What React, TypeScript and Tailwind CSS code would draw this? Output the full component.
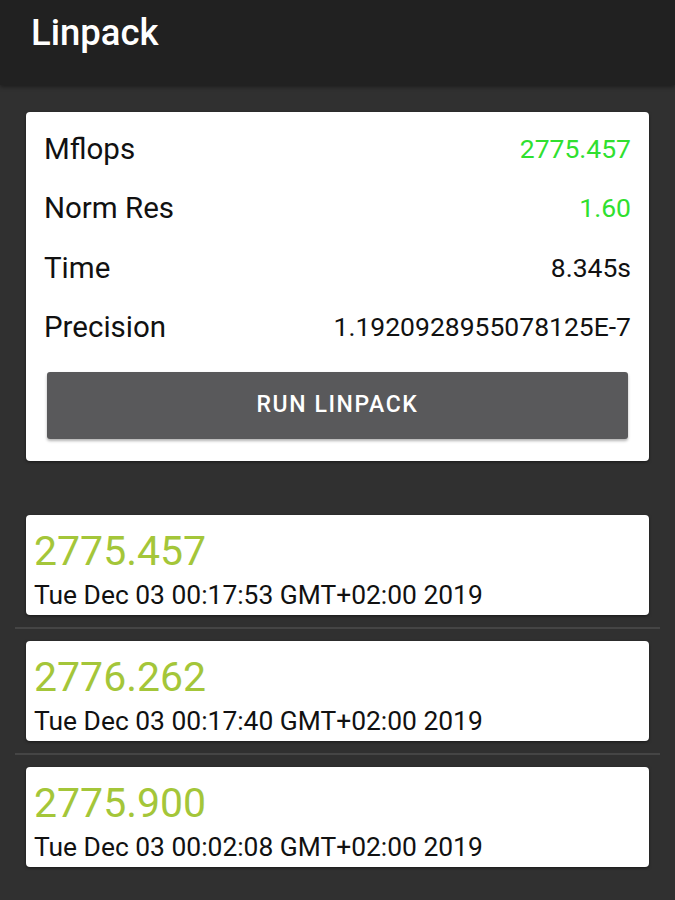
import React from "react";

const font = { fontFamily: "Roboto, 'Noto Sans', sans-serif" };

const rows = [
  { label: "Mflops", value: "2775.457", green: true },
  { label: "Norm Res", value: "1.60", green: true },
  { label: "Time", value: "8.345s", green: false },
  { label: "Precision", value: "1.1920928955078125E-7", green: false },
];

const history = [
  { v: "2775.457", d: "Tue Dec 03 00:17:53 GMT+02:00 2019" },
  { v: "2776.262", d: "Tue Dec 03 00:17:40 GMT+02:00 2019" },
  { v: "2775.900", d: "Tue Dec 03 00:02:08 GMT+02:00 2019" },
];

export default function App() {
  return (
    <div className="w-[675px] h-[900px] overflow-hidden bg-[#303030] flex flex-col" style={font}>
      <div className="h-[85px] bg-[#212121] flex items-start pt-[15px] px-[31px] shadow-[0_2px_4px_rgba(0,0,0,0.4)] z-10">
        <span className="text-white text-[36.5px] font-medium leading-none">Linpack</span>
      </div>
      <div className="flex flex-col">
        <div className="mt-[27px] mx-[26px] bg-white rounded-[4px] shadow-[0_1px_3px_rgba(0,0,0,0.5)] pt-[7px] pb-[22px]">
          {rows.map((r) => (
            <div key={r.label} className="h-[59.5px] flex items-center justify-between pl-[18px] pr-[18px]">
              <span className="text-[29.5px] text-[#111111]">{r.label}</span>
              <span className={`text-[26.5px] ${r.green ? "text-[#2fe02f]" : "text-[#111111]"}`}>{r.value}</span>
            </div>
          ))}
          <div className="mx-[21px] mt-[15px] h-[67px] rounded-[3px] bg-[#59595b] shadow-[0_2px_3px_rgba(0,0,0,0.3)] flex items-center justify-center">
            <span className="text-white text-[23px] font-medium tracking-[1.6px]">RUN LINPACK</span>
          </div>
        </div>
        <div className="mt-[54px] mx-[15px] flex flex-col">
          {history.map((h, i) => (
            <div key={h.d} className="flex flex-col">
              {i > 0 && <div className="h-[2px] bg-[#454545] mt-[12px] mb-[12px]" />}
              <div className="mx-[11px] h-[100px] bg-white rounded-[4px] shadow-[0_1px_3px_rgba(0,0,0,0.5)] px-[8px] pt-[12px] flex flex-col">
                <span className="text-[41px] leading-[48px] text-[#a4c639]">{h.v}</span>
                <span className="mt-[5px] text-[26.4px] leading-[30px] text-[#111111] whitespace-nowrap">{h.d}</span>
              </div>
            </div>
          ))}
        </div>
      </div>
    </div>
  );
}
